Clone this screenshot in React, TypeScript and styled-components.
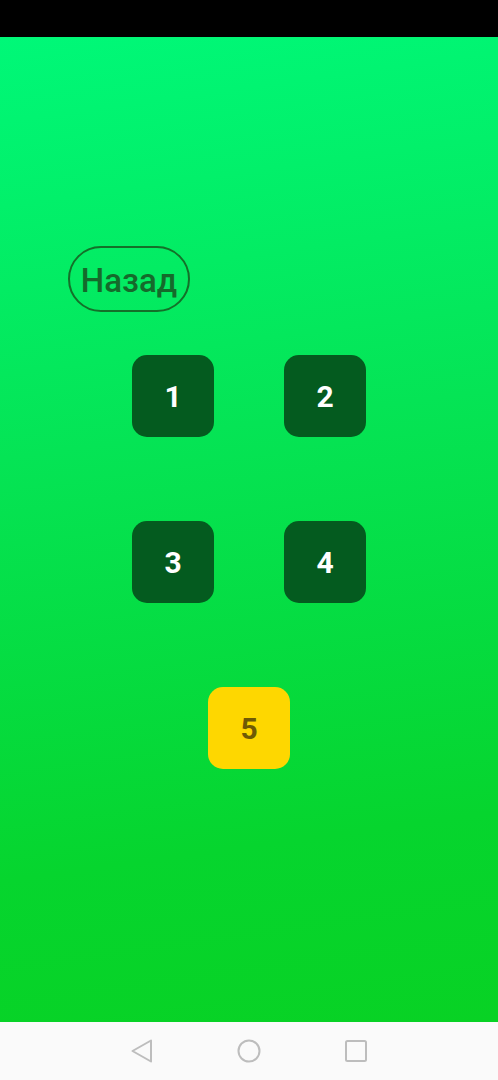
import React from 'react';
import styled, { createGlobalStyle } from 'styled-components';

const GlobalStyle = createGlobalStyle`
  html, body {
    margin: 0;
    padding: 0;
    height: 100%;
  }
  body {
    font-family: Roboto, "Noto Sans", sans-serif;
  }
  #root {
    height: 100%;
  }
`;

const Screen = styled.div`
  display: flex;
  flex-direction: column;
  width: 498px;
  height: 1080px;
  overflow: hidden;
`;

const StatusBar = styled.div`
  height: 37px;
  background: #000;
  flex-shrink: 0;
`;

const Main = styled.main`
  flex: 1;
  display: flex;
  flex-direction: column;
  background: linear-gradient(172deg, #00f878 0%, #05e455 40%, #06d52e 80%, #08d224 100%);
  padding: 209px 0 0 68px;
  box-sizing: border-box;
`;

const BackButton = styled.button`
  align-self: flex-start;
  width: 122px;
  height: 66px;
  box-sizing: border-box;
  border: 2.5px solid #147029;
  border-radius: 33px;
  background: transparent;
  color: #156a2b;
  font-family: Roboto, sans-serif;
  font-size: 33px;
  font-weight: 500;
  padding: 2px 0 0;
  cursor: pointer;
`;

const Grid = styled.div`
  display: grid;
  grid-template-columns: 82px 82px;
  column-gap: 70px;
  row-gap: 84px;
  justify-content: center;
  margin: 43px 0 0 -68px;
`;

const Tile = styled.button<{ $accent?: boolean }>`
  width: 82px;
  height: 82px;
  border: none;
  border-radius: 15px;
  background: ${p => (p.$accent ? '#fed700' : '#045b1f')};
  color: ${p => (p.$accent ? '#6f5a05' : '#ffffff')};
  font-family: Roboto, sans-serif;
  font-size: 30px;
  font-weight: 700;
  padding: 0;
  cursor: pointer;
  ${p => p.$accent && 'grid-column: 1 / span 2; justify-self: center;'}
`;

const NavBar = styled.nav`
  height: 58px;
  flex-shrink: 0;
  background: #fafafa;
  display: grid;
  grid-template-columns: 22px 24px 22px;
  column-gap: 84px;
  justify-content: center;
  align-items: center;
`;

const NavIcon = styled.svg`
  display: block;
`;

export default function App() {
  return (
    <>
      <GlobalStyle />
      <Screen>
        <StatusBar />
        <Main>
          <BackButton>Назад</BackButton>
          <Grid>
            <Tile>1</Tile>
            <Tile>2</Tile>
            <Tile>3</Tile>
            <Tile>4</Tile>
            <Tile $accent>5</Tile>
          </Grid>
        </Main>
        <NavBar>
          <NavIcon width="22" height="24" viewBox="0 0 22 24">
            <path d="M20 1.5 L1.5 12 L20 22.5 Z" fill="none" stroke="#bdbdbd" strokeWidth="2" strokeLinejoin="round" />
          </NavIcon>
          <NavIcon width="24" height="24" viewBox="0 0 24 24">
            <circle cx="12" cy="12" r="10.5" fill="none" stroke="#bdbdbd" strokeWidth="2" />
          </NavIcon>
          <NavIcon width="22" height="22" viewBox="0 0 22 22">
            <rect x="1" y="1" width="20" height="20" rx="1.5" fill="none" stroke="#bdbdbd" strokeWidth="2" />
          </NavIcon>
        </NavBar>
      </Screen>
    </>
  );
}
